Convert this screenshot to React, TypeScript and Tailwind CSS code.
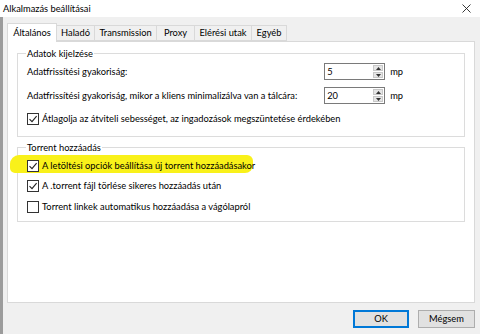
import { useState } from "react";

const tabs = [
  { name: "Általános", w: "w-[50px]" },
  { name: "Haladó", w: "w-[39px]" },
  { name: "Transmission", w: "w-[63px]" },
  { name: "Proxy", w: "w-[39px]" },
  { name: "Elérési utak", w: "w-[58px]" },
  { name: "Egyéb", w: "w-[36px]" },
];

function CheckBox({ checked }: { checked: boolean }) {
  return (
    <span className="w-[12px] h-[12px] border border-[#333333] bg-white flex items-center justify-center shrink-0">
      {checked && (
        <svg width="10" height="10" viewBox="0 0 10 10">
          <path d="M1.5 5.2 L4 7.6 L8.6 2.2" fill="none" stroke="#222" strokeWidth="1.1" />
        </svg>
      )}
    </span>
  );
}

function SpinBox({ value }: { value: string }) {
  return (
    <div className="flex items-center gap-[5px]">
      <div className="w-[61px] h-[17px] border border-[#7a7a7a] bg-white flex items-stretch">
        <span className="flex-1 pl-[2px] leading-[15px]">{value}</span>
        <div className="w-[10px] flex flex-col gap-[1px] py-[1px] mr-[1px]">
          <span className="flex-1 bg-[#e5e5e5] border border-[#c8c8c8] flex items-center justify-center">
            <svg width="5" height="3" viewBox="0 0 5 3"><path d="M0 3 L2.5 0 L5 3Z" fill="#333" /></svg>
          </span>
          <span className="flex-1 bg-[#e5e5e5] border border-[#c8c8c8] flex items-center justify-center">
            <svg width="5" height="3" viewBox="0 0 5 3"><path d="M0 0 L2.5 3 L5 0Z" fill="#333" /></svg>
          </span>
        </div>
      </div>
      <span>mp</span>
    </div>
  );
}

export default function App() {
  const [active] = useState(0);

  return (
    <div className="w-[480px] h-[334px] bg-[#f0f0f0] flex flex-col text-[9.3px] text-black overflow-hidden whitespace-nowrap font-['Lato',sans-serif]">
      {/* címsor */}
      <div className="h-[17px] bg-white flex items-center justify-between pl-[3px] pr-[9px] shrink-0">
        <span>Alkalmazás beállításai</span>
        <svg width="9" height="9" viewBox="0 0 9 9">
          <path d="M0.5 0.5 L8.5 8.5 M8.5 0.5 L0.5 8.5" stroke="#222" strokeWidth="0.9" />
        </svg>
      </div>

      <div className="flex flex-1">
        <div className="w-[3px] bg-[#9c9c9c] shrink-0" />
        <div className="flex-1 flex flex-col pl-[4px] pr-[5px]">
          {/* fülek */}
          <div className="flex items-end mt-[5px] h-[19px] pl-[1px]">
            {tabs.map((t, i) =>
              i === active ? (
                <div key={t.name} className={`${t.w} h-[19px] text-center bg-white border border-b-0 border-[#d9d9d9] -mb-[1px] relative z-10 leading-[18px] -ml-[1px]`}>
                  {t.name}
                </div>
              ) : (
                <div key={t.name} className={`${t.w} h-[16px] text-center bg-[#f0f0f0] border border-[#d9d9d9] -ml-[1px] leading-[14px]`}>
                  {t.name}
                </div>
              )
            )}
          </div>

          {/* panel */}
          <div className="h-[262px] bg-white border border-[#d9d9d9] pt-[4px] pl-[9px] pr-[9px]">
            <fieldset className="border border-[#dcdcdc] px-[9px] pb-[9px]">
              <legend className="px-[1px] -ml-[1px] leading-[15px]">Adatok kijelzése</legend>
              <div className="flex items-center justify-between h-[17px] mt-[2px] pr-[52px]">
                <span>Adatfrissítési gyakoriság:</span>
                <SpinBox value="5" />
              </div>
              <div className="flex items-center justify-between h-[17px] mt-[7px] pr-[52px]">
                <span>Adatfrissítési gyakoriság, mikor a kliens minimalizálva van a tálcára:</span>
                <SpinBox value="20" />
              </div>
              <label className="flex items-center gap-[3px] h-[16px] mt-[7px]">
                <CheckBox checked />
                <span>Átlagolja az átviteli sebességet, az ingadozások megszüntetése érdekében</span>
              </label>
            </fieldset>

            <fieldset className="border border-[#dcdcdc] px-[9px] pb-[6px] mt-[3px]">
              <legend className="px-[1px] -ml-[1px] leading-[15px]">Torrent hozzáadás</legend>
              <label className="relative flex items-center gap-[3px] h-[16px] mt-[3px]">
                <span className="absolute -left-[17px] top-[-3px] w-[243px] h-[18px] bg-[#f9f11a] rounded-[9px_6px_8px_5px]" />
                <span className="relative"><CheckBox checked /></span>
                <span className="relative">A letöltési opciók beállítása új torrent hozzáadásakor</span>
              </label>
              <label className="flex items-center gap-[3px] h-[16px] mt-[4px]">
                <CheckBox checked />
                <span>A .torrent fájl törlése sikeres hozzáadás után</span>
              </label>
              <label className="flex items-center gap-[3px] h-[16px] mt-[5px]">
                <CheckBox checked={false} />
                <span>Torrent linkek automatikus hozzáadása a vágólapról</span>
              </label>
            </fieldset>
          </div>

          {/* gombok */}
          <div className="flex justify-end gap-[9px] mt-[7px]">
            <button className="w-[56px] h-[18px] bg-[#e1e1e1] border-2 border-[#0078d7] leading-[14px]">OK</button>
            <button className="w-[57px] h-[18px] bg-[#e1e1e1] border border-[#adadad] leading-[16px]">Mégsem</button>
          </div>
        </div>
      </div>
    </div>
  );
}
